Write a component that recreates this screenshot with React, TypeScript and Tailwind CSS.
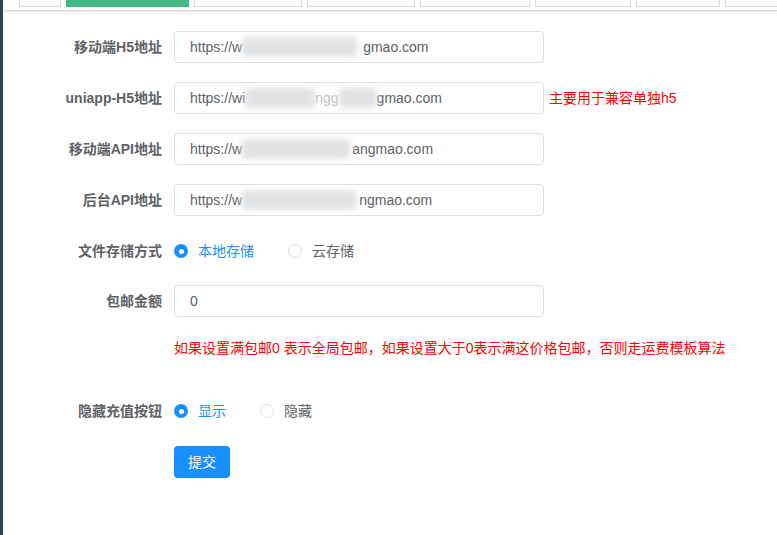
import React from 'react';

const font = { fontFamily: '"Liberation Sans", "Noto Sans CJK SC", sans-serif' };

const tabs = [42, 123, 108, 108, 110, 96, 84, 60];

const Blur: React.FC<{ w: number }> = ({ w }) => (
  <span className="inline-block h-[20px] align-middle bg-[#e1e2e4] blur-[3px] rounded" style={{ width: w }} />
);

const Row: React.FC<{ label: string; children: React.ReactNode; className?: string }> = ({ label, children, className }) => (
  <div className={`flex items-center h-8 ${className ?? ''}`}>
    <label className="w-[150px] pr-3 text-right text-[14px] font-bold text-[#606266] whitespace-nowrap">{label}</label>
    <div className="flex items-center">{children}</div>
  </div>
);

const Input: React.FC<{ children: React.ReactNode }> = ({ children }) => (
  <div className="w-[370px] h-8 border border-[#dcdfe6] rounded flex items-center px-[15px] text-[14px] text-[#606266] whitespace-nowrap overflow-hidden">
    {children}
  </div>
);

const Radio: React.FC<{ label: string; checked?: boolean }> = ({ label, checked }) => (
  <div className="flex items-center mr-[34px]">
    {checked ? (
      <span className="w-[14px] h-[14px] rounded-full bg-[#1890ff] flex items-center justify-center">
        <span className="w-[5px] h-[5px] rounded-full bg-white" />
      </span>
    ) : (
      <span className="w-[14px] h-[14px] rounded-full border border-[#dcdfe6] bg-white" />
    )}
    <span className={`ml-[10px] text-[14px] ${checked ? 'text-[#1890ff]' : 'text-[#606266]'}`}>{label}</span>
  </div>
);

export default function App() {
  return (
    <div className="flex min-h-[535px] bg-white" style={font}>
      <div className="w-[3px] bg-[#304156] shrink-0" />
      <div className="flex-1 overflow-hidden">
        <div className="h-[11px] border-b border-[#d8dce5] shadow-[0_1px_3px_0_rgba(0,0,0,0.10)] flex gap-[5px] pl-[16px] overflow-hidden">
          {tabs.map((w, i) => (
            <div
              key={i}
              className={`h-[7px] shrink-0 ${i === 1 ? 'bg-[#42b983]' : 'border-x border-b border-[#d8dce5] bg-white'}`}
              style={{ width: w }}
            />
          ))}
        </div>

        <div className="pl-[21px] pt-[20px]">
          <Row label="移动端H5地址" className="mb-[19px]">
            <Input>
              https://w<Blur w={115} />
              <span className="ml-[6px]">gmao.com</span>
            </Input>
          </Row>
          <Row label="uniapp-H5地址" className="mb-[19px]">
            <Input>
              https://wi<Blur w={70} />
              <span className="text-[#c0c1c4]">ngg</span>
              <Blur w={38} />
              <span>gmao.com</span>
            </Input>
            <span className="ml-[5px] text-[14px] text-[#ff0000] whitespace-nowrap">主要用于兼容单独h5</span>
          </Row>
          <Row label="移动端API地址" className="mb-[19px]">
            <Input>
              https://w<Blur w={108} />
              <span className="ml-[2px]">angmao.com</span>
            </Input>
          </Row>
          <Row label="后台API地址" className="mb-[19px]">
            <Input>
              https://w<Blur w={114} />
              <span className="ml-[3px]">ngmao.com</span>
            </Input>
          </Row>
          <Row label="文件存储方式" className="mb-[18px]">
            <Radio label="本地存储" checked />
            <Radio label="云存储" />
          </Row>
          <Row label="包邮金额">
            <Input>0</Input>
          </Row>
          <div className="pl-[150px] mt-[21px] h-5 flex items-center text-[14px] text-[#ff0000] whitespace-nowrap">
            如果设置满包邮0 表示全局包邮，如果设置大于0表示满这价格包邮，否则走运费模板算法
          </div>
          <Row label="隐藏充值按钮" className="mt-[37px]">
            <Radio label="显示" checked />
            <Radio label="隐藏" />
          </Row>
          <div className="pl-[150px] mt-[19px]">
            <button className="w-[56px] h-8 rounded bg-[#1890ff] text-white text-[14px]">提交</button>
          </div>
        </div>
      </div>
    </div>
  );
}
